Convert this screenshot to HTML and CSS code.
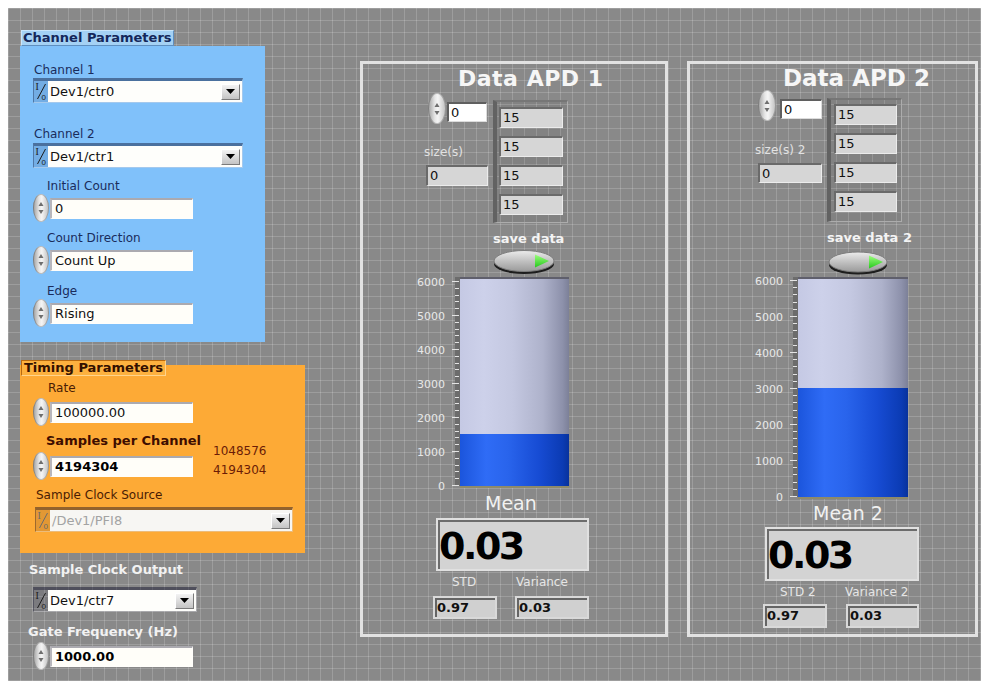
FILE: index.html
```html
<!DOCTYPE html>
<html lang="en">
<head>
<meta charset="utf-8">
<title>Counter Acquisition Panel</title>
<link rel="stylesheet" href="styles.css">
</head>
<body>
<main class="front">

  <!-- configuration column -->
  <section class="left-col">
    <div class="cl-label cl-label-blue">Channel Parameters</div>
    <div class="cluster cluster-blue">
      <div class="lbl lbl-blue ch1-lbl">Channel 1</div>
      <div class="ring ch-ring ch1-ring">
        <svg class="io" viewBox="0 0 13 20" width="13" height="20"><text x="1" y="9" class="io-i">I</text><path d="M3 18L11 3" class="io-slash"/><text x="7" y="19" class="io-o">0</text></svg>
        <div class="rfield"><span>Dev1/ctr0</span><span class="drop"><svg width="9" height="5" viewBox="0 0 9 5"><path d="M0 0H9L4.5 5Z"/></svg></span></div>
      </div>
      <div class="lbl lbl-blue ch2-lbl">Channel 2</div>
      <div class="ring ch-ring ch2-ring">
        <svg class="io" viewBox="0 0 13 20" width="13" height="20"><text x="1" y="9" class="io-i">I</text><path d="M3 18L11 3" class="io-slash"/><text x="7" y="19" class="io-o">0</text></svg>
        <div class="rfield"><span>Dev1/ctr1</span><span class="drop"><svg width="9" height="5" viewBox="0 0 9 5"><path d="M0 0H9L4.5 5Z"/></svg></span></div>
      </div>
      <div class="lbl lbl-blue ic-lbl">Initial Count</div>
      <div class="num num-first">
        <span class="spin"><svg width="8" height="22" viewBox="0 0 8 22"><path d="M4 5L6.5 9H1.5Z"/><path d="M4 17L6.5 13H1.5Z"/></svg></span>
        <div class="nfield">0</div>
      </div>
      <div class="lbl lbl-blue cd-lbl">Count Direction</div>
      <div class="num num-first">
        <span class="spin"><svg width="8" height="22" viewBox="0 0 8 22"><path d="M4 5L6.5 9H1.5Z"/><path d="M4 17L6.5 13H1.5Z"/></svg></span>
        <div class="nfield">Count Up</div>
      </div>
      <div class="lbl lbl-blue edge-lbl">Edge</div>
      <div class="num num-first">
        <span class="spin"><svg width="8" height="22" viewBox="0 0 8 22"><path d="M4 5L6.5 9H1.5Z"/><path d="M4 17L6.5 13H1.5Z"/></svg></span>
        <div class="nfield">Rising</div>
      </div>
    </div>

    <div class="cl-label cl-label-orange">Timing Parameters</div>
    <div class="cluster cluster-orange">
      <div class="lbl lbl-orange rate-lbl">Rate</div>
      <div class="num rate-num">
        <span class="spin"><svg width="8" height="22" viewBox="0 0 8 22"><path d="M4 5L6.5 9H1.5Z"/><path d="M4 17L6.5 13H1.5Z"/></svg></span>
        <div class="nfield">100000.00</div>
      </div>
      <div class="lbl spc-lbl">Samples per Channel</div>
      <div class="spc-row">
        <div class="num">
          <span class="spin"><svg width="8" height="22" viewBox="0 0 8 22"><path d="M4 5L6.5 9H1.5Z"/><path d="M4 17L6.5 13H1.5Z"/></svg></span>
          <div class="nfield nfield-bold">4194304</div>
        </div>
        <div class="spc-list">1048576<br>4194304</div>
      </div>
      <div class="lbl lbl-orange scs-lbl">Sample Clock Source</div>
      <div class="ring scs-ring">
        <svg class="io io-dim" viewBox="0 0 13 20" width="13" height="20"><text x="1" y="9" class="io-i">I</text><path d="M3 18L11 3" class="io-slash"/><text x="7" y="19" class="io-o">0</text></svg>
        <div class="rfield rfield-dim"><span>/Dev1/PFI8</span><span class="drop"><svg width="9" height="5" viewBox="0 0 9 5"><path d="M0 0H9L4.5 5Z"/></svg></span></div>
      </div>
    </div>

    <div class="lbl lbl-free sco-lbl">Sample Clock Output</div>
    <div class="ring sco-ring">
      <svg class="io" viewBox="0 0 13 20" width="13" height="20"><text x="1" y="9" class="io-i">I</text><path d="M3 18L11 3" class="io-slash"/><text x="7" y="19" class="io-o">0</text></svg>
      <div class="rfield"><span>Dev1/ctr7</span><span class="drop"><svg width="9" height="5" viewBox="0 0 9 5"><path d="M0 0H9L4.5 5Z"/></svg></span></div>
    </div>
    <div class="lbl lbl-free gf-lbl">Gate Frequency (Hz)</div>
    <div class="num gf-num">
      <span class="spin"><svg width="8" height="22" viewBox="0 0 8 22"><path d="M4 5L6.5 9H1.5Z"/><path d="M4 17L6.5 13H1.5Z"/></svg></span>
      <div class="nfield nfield-bold">1000.00</div>
    </div>
  </section>

  <!-- detector 1 -->
  <section class="apd apd1">
    <div class="apd-title">Data APD 1</div>
    <div class="rowb">
      <div class="idx-col">
        <div class="idx-row">
          <span class="spin spin-lg"><svg width="8" height="22" viewBox="0 0 8 22"><path d="M4 5L6.5 9H1.5Z"/><path d="M4 17L6.5 13H1.5Z"/></svg></span>
          <div class="idx-field">0</div>
        </div>
        <div class="size-lbl">size(s)</div>
        <div class="cell size-ind">0</div>
      </div>
      <div class="arr">
        <div class="cell">15</div>
        <div class="cell">15</div>
        <div class="cell">15</div>
        <div class="cell">15</div>
      </div>
    </div>
    <div class="save-lbl">save data</div>
    <div class="btn">
      <svg width="62" height="22" viewBox="0 0 62 22">
        <defs>
          <linearGradient id="btnFaceA" x1="0" y1="0" x2="0" y2="1">
            <stop offset="0" stop-color="#ececec"/><stop offset=".55" stop-color="#bdbdbd"/><stop offset="1" stop-color="#9a9a9a"/>
          </linearGradient>
          <linearGradient id="btnLedA" x1="0" y1="0" x2="0" y2="1">
            <stop offset="0" stop-color="#9bff7c"/><stop offset="1" stop-color="#27c81e"/>
          </linearGradient>
        </defs>
        <ellipse cx="31" cy="14" rx="30" ry="10" fill="#1d1d1d"/>
        <ellipse cx="31" cy="11" rx="30" ry="10.5" fill="url(#btnFaceA)" stroke="#7d7d7d"/>
        <path d="M42 4.5L56 11L42 17.5Z" fill="url(#btnLedA)"/>
      </svg>
    </div>
    <div class="tank-row">
      <svg class="scale" width="52" height="209" viewBox="0 0 52 209">
        <rect x="47" y="0" width="5" height="209" fill="#6c6c6c"/>
        <path class="tick" d="M44 4.5H51M44 38.5H51M44 72.5H51M44 106.5H51M44 140.5H51M44 174.5H51M44 208.5H51"/>
        <path class="tick" d="M47 11.5H51M47 18.5H51M47 24.5H51M47 31.5H51M47 45.5H51M47 52.5H51M47 58.5H51M47 65.5H51M47 79.5H51M47 86.5H51M47 92.5H51M47 99.5H51M47 113.5H51M47 120.5H51M47 126.5H51M47 133.5H51M47 147.5H51M47 154.5H51M47 160.5H51M47 167.5H51M47 181.5H51M47 188.5H51M47 194.5H51M47 201.5H51"/>
        <text x="37" y="8.5">6000</text><text x="37" y="42.5">5000</text><text x="37" y="76.5">4000</text><text x="37" y="110.5">3000</text><text x="37" y="144.5">2000</text><text x="37" y="178.5">1000</text><text x="37" y="212.5">0</text>
      </svg>
      <div class="tank tank1"><div class="fill" style="height:25%"></div></div>
    </div>
    <div class="mean-lbl">Mean</div>
    <div class="big">0.03</div>
    <div class="pair">
      <div class="pcol pcol-a"><div class="plbl">STD</div><div class="sbox">0.97</div></div>
      <div class="pcol pcol-b"><div class="plbl">Variance</div><div class="sbox">0.03</div></div>
    </div>
  </section>

  <!-- detector 2 -->
  <section class="apd apd2">
    <div class="apd-title">Data APD 2</div>
    <div class="rowb">
      <div class="idx-col">
        <div class="idx-row">
          <span class="spin spin-lg"><svg width="8" height="22" viewBox="0 0 8 22"><path d="M4 5L6.5 9H1.5Z"/><path d="M4 17L6.5 13H1.5Z"/></svg></span>
          <div class="idx-field">0</div>
        </div>
        <div class="size-lbl">size(s) 2</div>
        <div class="cell size-ind">0</div>
      </div>
      <div class="arr">
        <div class="cell">15</div>
        <div class="cell">15</div>
        <div class="cell">15</div>
        <div class="cell">15</div>
      </div>
    </div>
    <div class="save-lbl">save data 2</div>
    <div class="btn">
      <svg width="62" height="22" viewBox="0 0 62 22">
        <defs>
          <linearGradient id="btnFaceB" x1="0" y1="0" x2="0" y2="1">
            <stop offset="0" stop-color="#ececec"/><stop offset=".55" stop-color="#bdbdbd"/><stop offset="1" stop-color="#9a9a9a"/>
          </linearGradient>
          <linearGradient id="btnLedB" x1="0" y1="0" x2="0" y2="1">
            <stop offset="0" stop-color="#9bff7c"/><stop offset="1" stop-color="#27c81e"/>
          </linearGradient>
        </defs>
        <ellipse cx="30" cy="14" rx="29" ry="9.5" fill="#1d1d1d"/>
        <ellipse cx="30" cy="11" rx="29" ry="10" fill="url(#btnFaceB)" stroke="#7d7d7d"/>
        <path d="M41 4.5L55 11L41 17.5Z" fill="url(#btnLedB)"/>
      </svg>
    </div>
    <div class="tank-row">
      <svg class="scale" width="52" height="220" viewBox="0 0 52 220">
        <rect x="47" y="0" width="5" height="220" fill="#6c6c6c"/>
        <path class="tick" d="M44 3.5H51M44 39.5H51M44 75.5H51M44 111.5H51M44 147.5H51M44 183.5H51M44 219.5H51"/>
        <path class="tick" d="M47 10.5H51M47 17.5H51M47 25.5H51M47 32.5H51M47 46.5H51M47 53.5H51M47 61.5H51M47 68.5H51M47 82.5H51M47 89.5H51M47 97.5H51M47 104.5H51M47 118.5H51M47 125.5H51M47 133.5H51M47 140.5H51M47 154.5H51M47 161.5H51M47 169.5H51M47 176.5H51M47 190.5H51M47 197.5H51M47 205.5H51M47 212.5H51"/>
        <text x="37" y="7.5">6000</text><text x="37" y="43.5">5000</text><text x="37" y="79.5">4000</text><text x="37" y="115.5">3000</text><text x="37" y="151.5">2000</text><text x="37" y="187.5">1000</text><text x="37" y="223.5">0</text>
      </svg>
      <div class="tank tank2"><div class="fill" style="height:50%"></div></div>
    </div>
    <div class="mean-lbl">Mean 2</div>
    <div class="big">0.03</div>
    <div class="pair">
      <div class="pcol pcol-a"><div class="plbl">STD 2</div><div class="sbox">0.97</div></div>
      <div class="pcol pcol-b"><div class="plbl">Variance 2</div><div class="sbox">0.03</div></div>
    </div>
  </section>

</main>
</body>
</html>
```

FILE: styles.css
```css
* { box-sizing: border-box; }

html, body { margin: 0; height: 100%; }

body {
  padding: 8px 0 0 8px;
  background: #ffffff;
  overflow: hidden;
  font-family: "DejaVu Sans", "Liberation Sans", sans-serif;
  font-size: 12px;
}

/* front panel with its grid */
.front {
  width: 973px;
  height: 673px;
  overflow: hidden;
  display: flex;
  align-items: flex-start;
  background-color: #898989;
  background-image:
    linear-gradient(90deg, rgba(255,255,255,.17) 1px, transparent 1px),
    linear-gradient(rgba(255,255,255,.17) 1px, transparent 1px);
  background-size: 12px 12px;
}

/* ---------- left column ---------- */
.left-col {
  flex: none;
  width: 293px;
  margin: 22px 0 0 12px;
  display: flex;
  flex-direction: column;
  align-items: flex-start;
}

.cl-label {
  position: relative;
  z-index: 1;
  margin-left: 1px;
  font-weight: bold;
  font-size: 13px;
  line-height: 14px;
  border: 1px solid;
  white-space: nowrap;
}
.cl-label-blue {
  padding: 0 1px;
  background: #a4d1f4;
  color: #14275a;
  border-color: #c8e5fb #5f8fc0 #5f8fc0 #c8e5fb;
}
.cl-label-orange {
  margin-top: 18px;
  margin-bottom: -11px;
  padding: 0 2px;
  background: #fdb13f;
  color: #331000;
  border-color: #b86a10 #ffd48c #ffd48c #b86a10;
}

.cluster {
  flex: none;
  display: flex;
  flex-direction: column;
  align-items: flex-start;
}
.cluster-blue { width: 245px; height: 296px; background: #80c1fa; }
.cluster-orange { width: 285px; height: 188px; background: #fdaa36; }

.lbl { line-height: 14px; white-space: nowrap; }
.lbl-blue { color: #1a2c5c; }
.lbl-orange { color: #4a1c04; }
.lbl-free { font-weight: bold; font-size: 13px; color: #f2f2f2; }

.ch1-lbl { margin: 17px 0 0 14px; }
.ch1-ring { margin: 1px 0 0 13px; }
.ch2-lbl { margin: 24px 0 0 14px; }
.ch2-ring { margin: 2px 0 0 13px; }
.ic-lbl { margin: 11px 0 0 27px; }
.cd-lbl { margin: 9px 0 0 27px; }
.edge-lbl { margin: 10px 0 0 27px; }
.num-first { margin: 1px 0 0 13px; }

.rate-lbl { margin: 16px 0 0 28px; }
.rate-num { margin: 3px 0 0 13px; }
.spc-lbl { margin: 8px 0 0 26px; font-weight: bold; font-size: 13px; color: #3d0d00; }
.spc-row { display: flex; align-items: flex-start; margin: 4px 0 0 13px; }
.spc-list {
  margin: -10px 0 0 20px;
  line-height: 19px;
  color: #6b1c06;
}
.scs-lbl { margin: 8px 0 0 16px; }
.scs-ring { margin: 5px 0 0 15px; width: 258px; }

.sco-lbl { margin: 10px 0 0 9px; }
.sco-ring { margin: 10px 0 0 13px; width: 164px; }
.gf-lbl { margin: 13px 0 0 8px; }
.gf-num { margin: 3px 0 0 13px; }

/* ring (dropdown) controls */
.ring {
  display: flex;
  align-items: stretch;
  height: 25px;
  border-style: solid;
  border-width: 3px 1px 1px 1px;
  border-color: rgba(0,0,30,.35) rgba(255,255,255,.35) rgba(255,255,255,.35) rgba(0,0,30,.3);
  background: rgba(0,0,40,.1);
}
.ch-ring { width: 210px; }
.io { flex: none; width: 14px; height: 20px; margin-top: 0; }
.io text { fill: #1b1b1b; }
.io-i { font-family: "Liberation Serif", serif; font-size: 10px; }
.io-o { font-family: "Liberation Sans", sans-serif; font-size: 8px; }
.io-slash { stroke: #1b1b1b; stroke-width: 1; fill: none; }
.io-dim text { fill: #6b6b6b; }
.io-dim .io-slash { stroke: #6b6b6b; }

.rfield {
  flex: 1;
  display: flex;
  align-items: center;
  justify-content: space-between;
  padding: 0 2px 0 2px;
  background: #fefefb;
  font-size: 13px;
  color: #111;
}
.rfield-dim { color: #a3a3a3; background: #f7f6f3; }
.drop {
  display: flex;
  align-items: center;
  justify-content: center;
  width: 19px;
  height: 16px;
  background: linear-gradient(#f3f3f3, #c4c4c4);
  border: 1px solid;
  border-color: #ffffff #7b7b7b #7b7b7b #ffffff;
}
.drop path { fill: #000; }

/* numeric controls */
.num { display: flex; align-items: center; height: 28px; }
.spin {
  flex: none;
  display: flex;
  align-items: center;
  justify-content: center;
  width: 16px;
  height: 28px;
  border-radius: 50%;
  background: linear-gradient(90deg, #9b9b9b 0%, #e6e6e6 38%, #f5f5f5 55%, #bdbdbd 100%);
  box-shadow: inset 0 0 0 1px rgba(0,0,0,.22);
}
.spin path { fill: #6e6e6e; }
.nfield {
  width: 143px;
  height: 21px;
  margin-left: 1px;
  padding-left: 3px;
  background: #fffef9;
  border-style: solid;
  border-width: 2px 1px 1px 2px;
  border-color: rgba(0,0,30,.33) rgba(255,255,255,.45) rgba(255,255,255,.45) rgba(0,0,30,.28);
  font-size: 13px;
  line-height: 17px;
  color: #111;
  white-space: nowrap;
}
.nfield-bold { font-weight: bold; color: #000; }

/* ---------- data panels ---------- */
.apd {
  flex: none;
  margin-top: 53px;
  height: 576px;
  border: 3px solid #e2e2e2;
  display: flex;
  flex-direction: column;
  align-items: flex-start;
  color: #eeeeee;
}
.apd1 { width: 308px; margin-left: 47px; }
.apd2 { width: 291px; margin-left: 19px; }

.apd-title { font-weight: bold; color: #f6f6f6; white-space: nowrap; }
.apd1 .apd-title { font-size: 22px; line-height: 24px; letter-spacing: .5px; margin: 3px 0 0 95px; }
.apd2 .apd-title { font-size: 23px; line-height: 24px; margin: 2px 0 0 93px; }

.rowb { display: flex; align-items: flex-start; }
.apd1 .rowb { margin-left: 61px; }
.apd2 .rowb { margin-left: 65px; }

.idx-col { flex: none; display: flex; flex-direction: column; align-items: flex-start; }
.apd1 .idx-col { width: 64px; }
.apd2 .idx-col { width: 67px; }
.idx-row { display: flex; align-items: flex-start; }
.apd1 .idx-row { margin: 2px 0 0 4px; }
.apd2 .idx-row { margin: 0 0 0 3px; }
.spin-lg { width: 18px; height: 31px; }
.idx-field {
  height: 20px;
  margin-top: 9px;
  padding-left: 2px;
  background: #ffffff;
  border-style: solid;
  border-width: 2px 1px 1px 2px;
  border-color: #5f5f5f #dcdcdc #dcdcdc #5f5f5f;
  font-size: 13px;
  line-height: 17px;
  color: #111;
}
.apd1 .idx-field { width: 40px; margin-left: 1px; }
.apd2 .idx-field { width: 42px; margin-left: 4px; }

.size-lbl { line-height: 14px; color: #e2e2e2; white-space: nowrap; }
.apd1 .size-lbl { margin-top: 21px; }
.apd2 .size-lbl { margin-top: 22px; }

.cell {
  height: 21px;
  padding-left: 2px;
  background: #d6d6d6;
  border-style: solid;
  border-width: 2px 1px 1px 2px;
  border-color: #6a6a6a #ececec #ececec #6a6a6a;
  font-size: 13px;
  line-height: 18px;
  color: #111;
}
.size-ind { margin-top: 6px; }
.apd1 .size-ind { width: 62px; margin-left: 2px; }
.apd2 .size-ind { width: 64px; height: 20px; line-height: 17px; margin-left: 3px; }

.arr {
  flex: none;
  display: flex;
  flex-direction: column;
  gap: 8px;
  width: 75px;
  margin-left: 5px;
  background: rgba(0,0,0,.05);
  border-style: solid;
  border-width: 2px 1px 1px 4px;
  border-color: #767676 #acacac #acacac #626262;
}
.apd1 .arr { height: 123px; margin-top: 9px; padding: 5px 0 0 2px; }
.apd1 .arr .cell { width: 64px; }
.apd2 .arr { height: 124px; margin-top: 8px; padding: 4px 0 0 3px; }
.apd2 .arr .cell { width: 63px; }

.save-lbl { font-weight: bold; font-size: 13px; line-height: 14px; color: #f4f4f4; white-space: nowrap; }
.apd1 .save-lbl { margin: 9px 0 0 130px; }
.apd2 .save-lbl { margin: 9px 0 0 137px; }

.btn { height: 22px; }
.btn svg { display: block; overflow: visible; }
.apd1 .btn { margin: 4px 0 0 130px; }
.apd2 .btn { margin: 6px 0 0 138px; height: 21px; }

.tank-row { display: flex; align-items: flex-start; margin-top: 5px; }
.apd1 .tank-row { margin-left: 45px; }
.apd2 .tank-row { margin-left: 56px; }
.scale { display: block; flex: none; overflow: visible; }
.scale .tick { stroke: #e4e4e4; stroke-width: 1; fill: none; }
.scale text {
  font-family: "DejaVu Sans", sans-serif;
  font-size: 11px;
  fill: #e8e8e8;
  text-anchor: end;
}

.tank {
  flex: none;
  display: flex;
  flex-direction: column;
  justify-content: flex-end;
  border-top: 2px solid #5f5f6c;
  box-shadow: 0 2px 0 #8e8a6a;
  background: linear-gradient(90deg, #c5c9e4 0%, #cdd1ea 22%, #c4c8e1 48%, #aeb2cb 76%, #8d91ab 94%, #7c8098 100%);
}
.tank1 { width: 109px; height: 209px; }
.tank2 { width: 110px; height: 220px; }
.fill {
  background: linear-gradient(90deg, #1b55dc 0%, #2f6cf6 24%, #2964ec 44%, #174cd4 72%, #0b3bb4 94%, #08329c 100%);
}

.mean-lbl { font-size: 19px; line-height: 20px; color: #f1f1f1; white-space: nowrap; }
.apd1 .mean-lbl { margin: 7px 0 0 122px; }
.apd2 .mean-lbl { margin: 6px 0 0 123px; }

.big {
  padding: 3px 0 0 1px;
  background: #d3d3d3;
  border: 2px solid #e0e0e0;
  box-shadow: inset 2px 2px 0 #6c6c6c;
  font-weight: bold;
  font-size: 38px;
  line-height: 46px;
  letter-spacing: -2.5px;
  color: #000;
}
.apd1 .big { width: 153px; height: 53px; margin: 5px 0 0 73px; }
.apd2 .big { width: 154px; height: 54px; margin: 4px 0 0 75px; }

.pair { display: flex; margin-top: 4px; }
.apd1 .pair { margin-left: 70px; gap: 18px; }
.apd2 .pair { margin-left: 73px; gap: 19px; }
.pcol { display: flex; flex-direction: column; align-items: flex-start; }
.plbl { line-height: 14px; color: #e6e6e6; white-space: nowrap; }
.sbox {
  height: 23px;
  margin-top: 7px;
  padding-left: 2px;
  background: #d0d0d0;
  border: 2px solid #d9d9d9;
  box-shadow: inset 2px 2px 0 #656565;
  font-weight: bold;
  font-size: 13px;
  line-height: 19px;
  color: #111;
}
.apd1 .pcol-a { width: 64px; }
.apd1 .pcol-a .plbl { padding-left: 19px; }
.apd1 .pcol-b { width: 74px; }
.apd1 .pcol-b .plbl { padding-left: 1px; }
.apd1 .pcol-a .sbox { width: 64px; }
.apd1 .pcol-b .sbox { width: 74px; }
.apd2 .pcol-a { width: 64px; }
.apd2 .pcol-a .plbl { padding-left: 17px; }
.apd2 .pcol-b { width: 73px; }
.apd2 .pcol-b .plbl { margin-left: -1px; }
.apd2 .sbox { height: 24px; margin-top: 5px; line-height: 20px; }
.apd2 .pcol-a .sbox { width: 64px; }
.apd2 .pcol-b .sbox { width: 73px; }
```
